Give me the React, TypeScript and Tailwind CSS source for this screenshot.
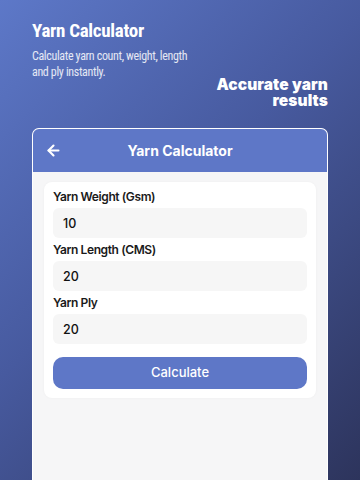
import React, { useState } from 'react';
import { ArrowLeft } from 'lucide-react';

const fields = [
  { label: 'Yarn Weight (Gsm)', value: '10' },
  { label: 'Yarn Length (CMS)', value: '20' },
  { label: 'Yarn Ply', value: '20' },
];

export default function App() {
  const [values, setValues] = useState(fields.map(f => f.value));

  return (
    <div className="w-[360px] h-[480px] overflow-hidden flex flex-col bg-[linear-gradient(135deg,#5d78c8_0%,#475a9f_45%,#2d345c_100%)] font-['Inter',sans-serif]">
      {/* Hero */}
      <div className="px-8 pt-[21px]">
        <h1 className="text-white font-bold text-[19px] leading-[20px] font-['Roboto_Condensed','Liberation_Sans_Narrow','Roboto',sans-serif] tracking-[-0.3px]">
          Yarn Calculator
        </h1>
        <p className="mt-[7px] text-[12px] leading-[16px] text-white/85 font-['Roboto_Condensed','Liberation_Sans_Narrow','Roboto',sans-serif] tracking-[-0.35px] w-[170px]">
          Calculate yarn count, weight, length and ply instantly.
        </p>
        <p className="-mt-[3px] ml-auto w-[150px] text-right text-white font-black text-[15.5px] leading-[16px] tracking-[0.1px]">
          Accurate yarn
          <br />
          results
        </p>
      </div>

      {/* Phone frame */}
      <div className="mx-8 mt-[19px] flex-1 flex flex-col border-[1.5px] border-b-0 border-white rounded-t-[7px] overflow-hidden bg-[#f6f6f7]">
        <div className="h-[43px] shrink-0 bg-[#5e77c7] flex items-center px-3 relative">
          <ArrowLeft className="w-[17px] h-[17px] text-white" strokeWidth={3} />
          <span className="absolute inset-0 flex items-center justify-center text-white font-bold text-[14px]">
            Yarn Calculator
          </span>
        </div>

        <div className="px-[11px] pt-[10px]">
          <div className="bg-white rounded-[8px] px-[9px] pt-[7px] pb-[9px] shadow-[0_0_3px_rgba(0,0,0,0.04)]">
            {fields.map((f, i) => (
              <div key={f.label} className="mb-[4px]">
                <div className="text-[12px] font-semibold text-[#1a1a1a] leading-[16px] tracking-[-0.4px] mb-[3px]">{f.label}</div>
                <input
                  className="w-full h-[30px] rounded-[6px] bg-[#f6f6f6] px-[10px] text-[12.5px] font-medium text-[#111] outline-none"
                  value={values[i]}
                  onChange={e => setValues(values.map((v, j) => (j === i ? e.target.value : v)))}
                />
              </div>
            ))}
            <button className="mt-[9px] w-full h-[32px] rounded-[10px] bg-[#5e77c7] text-white text-[13px] font-medium">
              Calculate
            </button>
          </div>
        </div>
      </div>
    </div>
  );
}
